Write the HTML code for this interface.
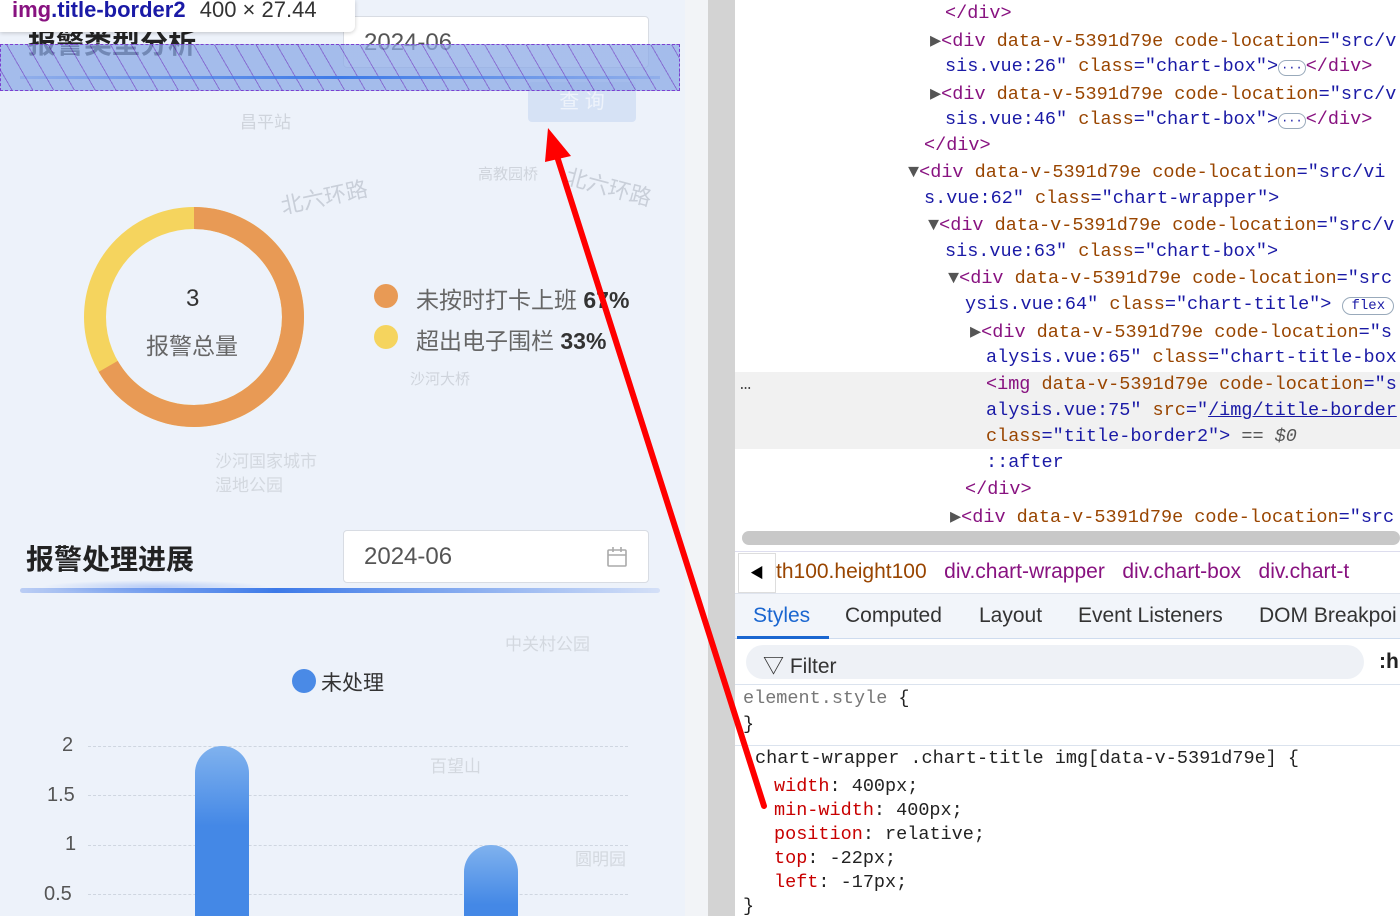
<!DOCTYPE html>
<html><head><meta charset="utf-8"><style>
*{margin:0;padding:0;box-sizing:border-box}
body{width:1400px;height:916px;overflow:hidden;position:relative;background:#fff;font-family:"Liberation Sans","Noto Sans CJK SC",sans-serif}
.a{position:absolute;white-space:nowrap}
#left{position:absolute;left:0;top:0;width:685px;height:916px;background:#edf2fa;overflow:hidden}
.mono{font-family:"Liberation Mono","DejaVu Sans Mono",monospace;font-size:18.5px;color:#1a1aa6}
.t{color:#881280}.n{color:#994500}.v{color:#1a1aa6}.g{color:#555}
.date{position:absolute;border:1px solid #d8dce3;border-radius:4px;background:#fff;color:#555;font-size:24px}
</style></head><body>
<div id="left">
  <div class="a" style="left:280px;top:180px;color:#c9cfd9;font-size:22px;transform:rotate(-12deg)">北六环路</div>
  <div class="a" style="left:565px;top:170px;color:#c9cfd9;font-size:22px;transform:rotate(15deg)">北六环路</div>
  <div class="a" style="left:478px;top:163px;color:#cfd4dc;font-size:15px">高教园桥</div>
  <div class="a" style="left:240px;top:108px;color:#cfd4dc;font-size:17px">昌平站</div>
  <div class="a" style="left:410px;top:368px;color:#cfd4dc;font-size:15px">沙河大桥</div>
  <div class="a" style="left:215px;top:447px;color:#d3d8df;font-size:17px">沙河国家城市</div>
  <div class="a" style="left:215px;top:471px;color:#d3d8df;font-size:17px">湿地公园</div>
  <div class="a" style="left:505px;top:630px;color:#d3d8df;font-size:17px">中关村公园</div>
  <div class="a" style="left:430px;top:752px;color:#d3d8df;font-size:17px">百望山</div>
  <div class="a" style="left:575px;top:845px;color:#d3d8df;font-size:17px">圆明园</div>
  <div class="a" style="left:28px;top:22px;font-size:28px;font-weight:bold;color:#222">报警类型分析</div>
  <div class="date" style="left:343px;top:16px;width:306px;height:52px;padding:12px 20px">2024-06</div>
  <div class="a" style="left:528px;top:82px;width:108px;height:40px;background:#d6e2f5;border-radius:4px;color:#eef3fb;font-size:20px;text-align:center;line-height:40px">查 询</div>
  <div class="a" style="left:0;top:44px;width:680px;height:47px;background:repeating-linear-gradient(60deg,rgba(140,170,230,.75) 0 9px,rgba(110,80,200,.8) 9px 10px,rgba(140,170,230,.75) 10px 18px);border:1px dashed #7c3fd0"></div>
  <div class="a" style="left:20px;top:76px;width:640px;height:3px;background:linear-gradient(90deg,rgba(70,120,230,.2),#3d7ae8,rgba(70,120,230,.2))"></div>
  <svg class="a" style="left:80px;top:203px" width="228" height="228" viewBox="0 0 228 228">
    <circle cx="114" cy="114" r="99" fill="none" stroke="#f5d45e" stroke-width="22"/>
    <circle cx="114" cy="114" r="99" fill="none" stroke="#e89a55" stroke-width="22" stroke-dasharray="414.6 622" transform="rotate(-90 114 114)"/>
  </svg>
  <div class="a" style="left:186px;top:285px;font-size:24px;color:#333">3</div>
  <div class="a" style="left:146px;top:327px;font-size:23px;color:#666">报警总量</div>
  <div class="a" style="left:374px;top:284px;width:24px;height:24px;border-radius:50%;background:#e89a55"></div>
  <div class="a" style="left:374px;top:325px;width:24px;height:24px;border-radius:50%;background:#f5d45e"></div>
  <div class="a" style="left:416px;top:281px;font-size:23px;color:#666">未按时打卡上班 <b style="color:#333">67%</b></div>
  <div class="a" style="left:416px;top:322px;font-size:23px;color:#666">超出电子围栏 <b style="color:#333">33%</b></div>
  <div class="a" style="left:26px;top:538px;font-size:28px;font-weight:bold;color:#222">报警处理进展</div>
  <div class="date" style="left:343px;top:530px;width:306px;height:53px;padding:12px 20px">2024-06</div>
  <svg class="a" style="left:606px;top:546px" width="22" height="22" viewBox="0 0 22 22" fill="none" stroke="#aaa" stroke-width="1.6"><rect x="2" y="4" width="18" height="16" rx="1"/><path d="M2 9h18M7 1v5M15 1v5"/></svg>
  <div class="a" style="left:20px;top:588px;width:640px;height:5px;border-radius:3px;background:linear-gradient(90deg,rgba(70,120,230,.3),#3d7ae8 40%,rgba(70,120,230,.15))"></div>
  <div class="a" style="left:40px;top:580px;width:230px;height:14px;background:radial-gradient(ellipse at center,rgba(80,130,240,.35),transparent 70%)"></div>
  <div class="a" style="left:292px;top:669px;width:24px;height:24px;border-radius:50%;background:#4a8ae6"></div>
  <div class="a" style="left:321px;top:667px;font-size:21px;color:#333">未处理</div>
  <div class="a" style="left:62px;top:734px;font-size:20px;color:#555">2</div>
  <div class="a" style="left:47px;top:784px;font-size:20px;color:#555">1.5</div>
  <div class="a" style="left:65px;top:833px;font-size:20px;color:#555">1</div>
  <div class="a" style="left:44px;top:883px;font-size:20px;color:#555">0.5</div>
  <div class="a" style="left:88px;top:746px;width:540px;border-top:1px dashed #cfd6e0"></div>
  <div class="a" style="left:88px;top:795px;width:540px;border-top:1px dashed #cfd6e0"></div>
  <div class="a" style="left:88px;top:845px;width:540px;border-top:1px dashed #cfd6e0"></div>
  <div class="a" style="left:88px;top:894px;width:540px;border-top:1px dashed #cfd6e0"></div>
  <div class="a" style="left:195px;top:746px;width:54px;height:200px;border-radius:27px 27px 0 0;background:linear-gradient(#80b2ee,#4488e6 40%)"></div>
  <div class="a" style="left:464px;top:845px;width:54px;height:100px;border-radius:27px 27px 0 0;background:linear-gradient(#80b2ee,#4488e6 60%)"></div>
  <div class="a" style="left:0;top:0;width:355px;height:32px;background:#fff;border-radius:0 0 6px 0;box-shadow:0 1px 4px rgba(0,0,0,.2);font-size:22px;padding:0 12px;line-height:20px"><b style="color:#881280;font-weight:bold">img</b><b style="color:#1a1aa6">.title-border2</b> <span style="color:#333;margin-left:8px">400 × 27.44</span></div>
</div>
<div class="a" style="left:685px;top:0;width:23px;height:916px;background:#f2f4f7"></div>
<div class="a" style="left:708px;top:0;width:27px;height:916px;background:#d3d3d3"></div>
<div class="a" style="left:735px;top:372px;width:665px;height:77px;background:#f1f1f1"></div>
<div class="a mono g" style="left:740px;top:374px;color:#444">…</div>
<div class="mono">
<div class="a" style="left:945px;top:3px"><span class="t">&lt;/div&gt;</span></div>
<div class="a" style="left:930px;top:30px"><span class="g">▶</span><span class="t">&lt;div</span> <span class="n">data-v-5391d79e code-location</span>="src/v</div>
<div class="a" style="left:945px;top:56px">sis.vue:26" <span class="n">class</span>="chart-box"&gt;<span style="border:1px solid #9ab;border-radius:8px;font-size:12px;padding:0 2px">···</span><span class="t">&lt;/div&gt;</span></div>
<div class="a" style="left:930px;top:83px"><span class="g">▶</span><span class="t">&lt;div</span> <span class="n">data-v-5391d79e code-location</span>="src/v</div>
<div class="a" style="left:945px;top:109px">sis.vue:46" <span class="n">class</span>="chart-box"&gt;<span style="border:1px solid #9ab;border-radius:8px;font-size:12px;padding:0 2px">···</span><span class="t">&lt;/div&gt;</span></div>
<div class="a" style="left:924px;top:135px"><span class="t">&lt;/div&gt;</span></div>
<div class="a" style="left:908px;top:162px"><span class="g">▼</span><span class="t">&lt;div</span> <span class="n">data-v-5391d79e code-location</span>="src/vi</div>
<div class="a" style="left:924px;top:188px">s.vue:62" <span class="n">class</span>="chart-wrapper"&gt;</div>
<div class="a" style="left:928px;top:215px"><span class="g">▼</span><span class="t">&lt;div</span> <span class="n">data-v-5391d79e code-location</span>="src/v</div>
<div class="a" style="left:945px;top:241px">sis.vue:63" <span class="n">class</span>="chart-box"&gt;</div>
<div class="a" style="left:948px;top:268px"><span class="g">▼</span><span class="t">&lt;div</span> <span class="n">data-v-5391d79e code-location</span>="src</div>
<div class="a" style="left:965px;top:294px">ysis.vue:64" <span class="n">class</span>="chart-title"&gt; <span style="border:1px solid #9ab;border-radius:9px;font-size:14px;padding:0 8px">flex</span></div>
<div class="a" style="left:970px;top:321px"><span class="g">▶</span><span class="t">&lt;div</span> <span class="n">data-v-5391d79e code-location</span>="s</div>
<div class="a" style="left:986px;top:347px">alysis.vue:65" <span class="n">class</span>="chart-title-box</div>
<div class="a" style="left:986px;top:374px"><span class="t">&lt;img</span> <span class="n">data-v-5391d79e code-location</span>="s</div>
<div class="a" style="left:986px;top:400px">alysis.vue:75" <span class="n">src</span>="<u>/img/title-border</u></div>
<div class="a" style="left:986px;top:426px"><span class="n">class</span>="title-border2"&gt; <span class="g">== <i>$0</i></span></div>
<div class="a" style="left:986px;top:452px">::after</div>
<div class="a" style="left:965px;top:479px"><span class="t">&lt;/div&gt;</span></div>
<div class="a" style="left:950px;top:506px"><span class="g">▶</span><span class="t">&lt;div</span> <span class="n">data-v-5391d79e code-location</span>="src</div>
</div>
<div class="a" style="left:742px;top:531px;width:658px;height:14px;background:#c8c8c8;border-radius:7px"></div>
<div class="a" style="left:735px;top:551px;width:665px;height:1px;background:#dde"></div>
<div class="a" style="left:738px;top:553px;width:38px;height:40px;border:1px solid #ddd;background:#fff;font-size:14px;text-align:center;line-height:38px">◀</div>
<div class="a" style="left:776px;top:560px;font-size:21px;color:#222"><span style="color:#994500">th100.height100</span> &nbsp; <span style="color:#881280">div.chart-wrapper</span> &nbsp; <span style="color:#881280">div.chart-box</span> &nbsp; <span style="color:#881280">div.chart-t</span></div>
<div class="a" style="left:735px;top:593px;width:665px;height:46px;background:#f2f5fa;border-top:1px solid #dfe4ee;border-bottom:1px solid #cfdcef"></div>
<div class="a" style="left:753px;top:604px;font-size:21px;color:#1a66d0">Styles</div>
<div class="a" style="left:737px;top:636px;width:92px;height:3px;background:#1a66d0"></div>
<div class="a" style="left:845px;top:604px;font-size:21px;color:#333">Computed</div>
<div class="a" style="left:979px;top:604px;font-size:21px;color:#333">Layout</div>
<div class="a" style="left:1078px;top:604px;font-size:21px;color:#333">Event Listeners</div>
<div class="a" style="left:1259px;top:604px;font-size:21px;color:#333">DOM Breakpoi</div>
<div class="a" style="left:746px;top:645px;width:618px;height:34px;background:#eef1f6;border-radius:17px"></div>
<div class="a" style="left:763px;top:650px;font-size:21px;color:#333">▽ Filter</div>
<div class="a" style="left:1379px;top:650px;font-size:21px;color:#222;font-weight:bold">:h</div>
<div class="a" style="left:735px;top:684px;width:665px;height:1px;background:#dbe3ee"></div>
<div class="a" style="left:735px;top:745px;width:665px;height:1px;background:#dbe3ee"></div>
<div class="mono" style="color:#222">
<div class="a" style="left:743px;top:688px"><span style="color:#777">element.style</span> {</div>
<div class="a" style="left:743px;top:714px">}</div>
<div class="a" style="left:755px;top:748px">chart-wrapper .chart-title img[data-v-5391d79e] {</div>
<div class="a" style="left:774px;top:776px"><span style="color:#c80000">width</span>: 400px;</div>
<div class="a" style="left:774px;top:800px"><span style="color:#c80000">min-width</span>: 400px;</div>
<div class="a" style="left:774px;top:824px"><span style="color:#c80000">position</span>: relative;</div>
<div class="a" style="left:774px;top:848px"><span style="color:#c80000">top</span>: -22px;</div>
<div class="a" style="left:774px;top:872px"><span style="color:#c80000">left</span>: -17px;</div>
<div class="a" style="left:743px;top:896px">}</div>
</div>
<svg class="a" style="left:0;top:0" width="1400" height="916"><line x1="764" y1="806" x2="555" y2="150" stroke="#f00" stroke-width="6" stroke-linecap="round"/><polygon points="548,128 571,156 545,162" fill="#f00"/></svg>
</body></html>
